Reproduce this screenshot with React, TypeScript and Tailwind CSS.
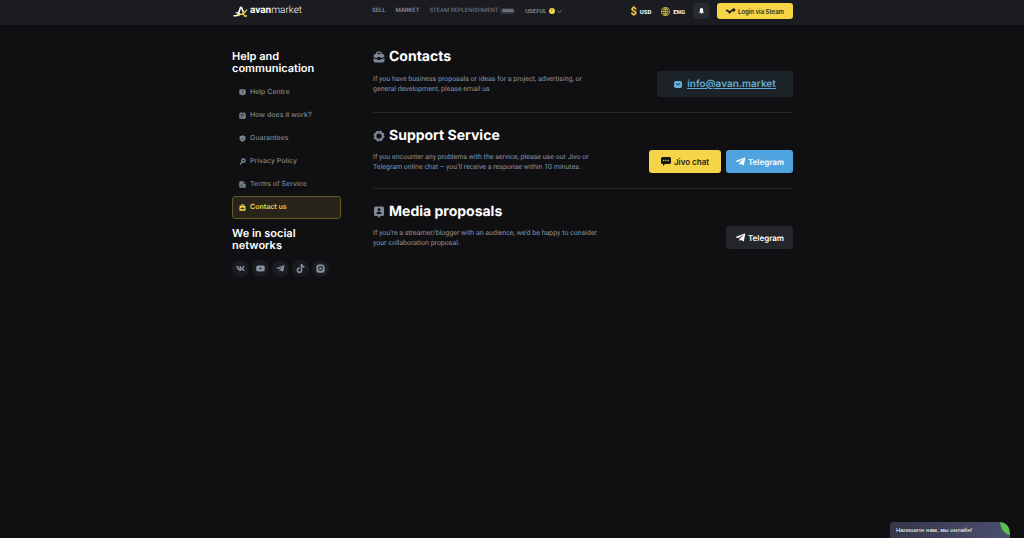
import type { ReactNode } from "react";
import { FaTelegramPlane, FaTiktok, FaVk, FaYoutube } from "react-icons/fa";

type IconProps = { className?: string };

const wide = "font-['Inter','DejaVu_Sans',sans-serif]";

function LogoMark() {
  return (
    <svg viewBox="0 0 30 22" className="h-[11px] w-[15px]" fill="none">
      <path d="M1 19.500h5c3 0 4-2 5-5L15 3h2l4 10" stroke="#fff" strokeWidth="3.200" />
      <path d="M5 13.500h5l4 2" stroke="#fff" strokeWidth="2.400" />
      <path d="M10 20c3-4 5-4 8-4 4-1 7-4 10-9M20 14l3 6h5" stroke="#f5d547" strokeWidth="2.800" />
    </svg>
  );
}

function BriefcaseIcon({ className }: IconProps) {
  return (
    <svg viewBox="0 0 24 24" className={className} fill="currentColor">
      <path d="M6 6V5a4 4 0 0 1 4-4h4a4 4 0 0 1 4 4v1h1a4 4 0 0 1 4 4v1c-2 2-4 3-7 3l-2-2h-4l-2 2c-3 0-5-1-7-3v-1a4 4 0 0 1 4-4h1Zm2.500 0h7V5A1.500 1.500 0 0 0 14 3.500h-4A1.500 1.500 0 0 0 8.500 5v1Z" />
      <path d="M1 14c2 1.500 5 2.500 8 2.500l1 1.500h4l1-1.500c3 0 6-1 8-2.500v5a4 4 0 0 1-4 4H5a4 4 0 0 1-4-4v-5Z" />
    </svg>
  );
}

function HelpIcon({ className }: IconProps) {
  return (
    <svg viewBox="0 0 24 24" className={className}>
      <path fill="currentColor" d="M6 1h12a5 5 0 0 1 5 5v9a5 5 0 0 1-5 5h-3l-3 3-3-3H6a5 5 0 0 1-5-5V6a5 5 0 0 1 5-5Z" />
      <path d="M9 8c1-3 6-3 6 0 0 2-3 2-3 4M12 15v2" fill="none" stroke="#101012" strokeWidth="2" />
    </svg>
  );
}

function CalendarIcon({ className }: IconProps) {
  return (
    <svg viewBox="0 0 24 24" className={className}>
      <path fill="currentColor" d="M5 1h4v2h6V1h4v2a4 4 0 0 1 4 4v12a4 4 0 0 1-4 4H5a4 4 0 0 1-4-4V7a4 4 0 0 1 4-4V1Z" />
      <path d="M4 8h16M6 13h10M6 17h6" stroke="#101012" strokeWidth="2" />
    </svg>
  );
}

function ShieldIcon({ className }: IconProps) {
  return (
    <svg viewBox="0 0 24 24" className={className}>
      <path fill="currentColor" d="m12 1 10 4v9c0 4-5 7-10 9-5-2-10-5-10-9V5l10-4Z" />
      <path d="m8 12 3 3 5-6" fill="none" stroke="#101012" strokeWidth="2.400" />
    </svg>
  );
}

function KeyIcon({ className }: IconProps) {
  return (
    <svg viewBox="0 0 24 24" className={className} fill="none" stroke="currentColor">
      <circle cx="15" cy="9" r="5.500" strokeWidth="5" />
      <path d="m11 13-8 8M4 18l4 4" strokeWidth="4" />
    </svg>
  );
}

function DocumentIcon({ className }: IconProps) {
  return (
    <svg viewBox="0 0 24 24" className={className}>
      <path fill="currentColor" d="M5 1h9v5a3 3 0 0 0 3 3h6v10a4 4 0 0 1-4 4H5a4 4 0 0 1-4-4V5a4 4 0 0 1 4-4Zm11 0 7 6h-6a1 1 0 0 1-1-1V1Z" />
      <path d="M5 11h5M5 17h8l4-4" fill="none" stroke="#101012" strokeWidth="2" />
    </svg>
  );
}

function GearIcon({ className }: IconProps) {
  return (
    <svg viewBox="0 0 24 24" className={className} fill="none" stroke="currentColor">
      <circle cx="12" cy="12" r="7.500" strokeWidth="4.500" />
      <circle cx="12" cy="12" r="9.500" strokeWidth="3" strokeDasharray="4.200 3.260" />
    </svg>
  );
}

function PersonIcon({ className }: IconProps) {
  return (
    <svg viewBox="0 0 24 24" className={className}>
      <path fill="currentColor" d="M5 1h14a3 3 0 0 1 3 3v13a3 3 0 0 1-3 3h-4l-3 4-3-4H5a3 3 0 0 1-3-3V4a3 3 0 0 1 3-3Z" />
      <circle cx="12" cy="7.500" r="2.800" fill="#101012" />
      <path fill="#101012" d="M7 15c0-5 10-5 10 0v1H7v-1Z" />
    </svg>
  );
}

function InstagramIcon({ className }: IconProps) {
  return (
    <svg viewBox="0 0 24 24" className={className}>
      <rect x="1" y="1" width="22" height="22" rx="6" fill="currentColor" />
      <circle cx="12" cy="12" r="5" fill="none" stroke="#1b1c21" strokeWidth="3" />
      <circle cx="18.500" cy="5.500" r="1.500" fill="#1b1c21" />
    </svg>
  );
}

function MailIcon() {
  return (
    <svg viewBox="0 0 24 21" className="h-[7px] w-2">
      <rect width="24" height="21" rx="5" fill="#67acd2" />
      <path d="m6 7 6 5 6-5" fill="none" stroke="#1b232a" strokeWidth="2.600" />
    </svg>
  );
}

function ChatIcon() {
  return (
    <svg viewBox="0 0 20 18" className="h-[9px] w-[10px]">
      <path fill="#15161a" d="M3 0h14a3 3 0 0 1 3 3v8a3 3 0 0 1-3 3H8l-4 4v-4H3a3 3 0 0 1-3-3V3a3 3 0 0 1 3-3Z" />
      <g fill="#f5d547">
        <circle cx="5.500" cy="7" r="1.400" />
        <circle cx="10" cy="7" r="1.400" />
        <circle cx="14.500" cy="7" r="1.400" />
      </g>
    </svg>
  );
}

function SteamIcon() {
  return (
    <svg viewBox="0 0 30 18" className="h-[6px] w-[10px]" fill="#24231c" stroke="#24231c">
      <path d="m0 6 11 6 9-6" fill="none" strokeWidth="5" />
      <circle cx="11" cy="13" r="3" strokeWidth="2" />
      <circle cx="23" cy="6" r="4" strokeWidth="3" />
    </svg>
  );
}

const menu = [
  { label: "Help Centre", Icon: HelpIcon },
  { label: "How does it work?", Icon: CalendarIcon },
  { label: "Guarantees", Icon: ShieldIcon },
  { label: "Privacy Policy", Icon: KeyIcon },
  { label: "Terms of Service", Icon: DocumentIcon },
  { label: "Contact us", Icon: BriefcaseIcon, active: true },
];

const socials = [
  { label: "VK", Icon: FaVk },
  { label: "YouTube", Icon: FaYoutube },
  { label: "Telegram", Icon: FaTelegramPlane },
  { label: "TikTok", Icon: FaTiktok },
  { label: "Instagram", Icon: InstagramIcon },
];

function Header() {
  return (
    <header className="bg-[#1b1c21] font-['Roboto',sans-serif]">
      <div className="mx-auto flex h-[25px] max-w-[562px] items-center pb-[3px] pl-[2px] text-[6px] font-medium">
        <a href="#" className="flex w-[139px] items-center gap-[2px] text-[10px] leading-[12px] text-white">
          <LogoMark />
          <span><b>avan</b><span className="font-light">market</span></span>
        </a>
        <nav className="flex items-center gap-[10px] leading-2 text-[#8a93a1]">
          <a href="#">SELL</a>
          <a href="#">MARKET</a>
          <a href="#" className="flex items-center gap-[2px] font-normal text-[#747a84]">
            STEAM REPLENISHMENT
            <span className="rounded-full bg-[#34363c] px-[2px] text-[4px] leading-[6px] font-bold text-[#a0a4ab]">SOON</span>
          </a>
          <button type="button" className="flex items-center gap-[2px]">
            USEFUL
            <span className="flex size-[6px] items-center justify-center rounded-full bg-[#f5d547] text-[4px] leading-none font-bold text-[#57501e]">!</span>
            <svg viewBox="0 0 10 6" className="h-[3px] w-[5px]" fill="none" stroke="currentColor" strokeWidth="1.500"><path d="m1 1 4 4 4-4" /></svg>
          </button>
        </nav>
        <div className="ml-auto flex items-center font-bold text-white">
          <button type="button" className="flex items-center gap-[3px]">
            <span className="text-[11px] leading-none text-[#f5d547]">$</span>
            USD
          </button>
          <button type="button" className="ml-[10px] flex items-center gap-[3px]">
            <svg viewBox="0 0 20 20" className="size-[9px]" fill="none" stroke="#e0c442" strokeWidth="1.600">
              <circle cx="10" cy="10" r="9" />
              <ellipse cx="10" cy="10" rx="4" ry="9" />
              <path d="M10 1v18M1 10h18M3 5h14M3 15h14" />
            </svg>
            ENG
          </button>
          <button type="button" aria-label="Notifications" className="ml-2 flex size-4 items-center justify-center rounded-[3px] bg-[#282a31]">
            <svg viewBox="0 0 12 14" className="h-[6px] w-[5px]" fill="#fff">
              <path d="M6 0c3 0 4 2 4 5v3l2 3H0l2-3V5c0-3 1-5 4-5Zm-2 12h4c0 2-4 2-4 0Z" />
            </svg>
          </button>
          <button type="button" className={`${wide} ml-2 flex h-4 w-[76px] items-center justify-center gap-[2px] rounded-[3px] bg-[#f5d547] text-[6px] font-semibold text-[#33301d]`}>
            <SteamIcon />
            Login via Steam
          </button>
        </div>
      </div>
    </header>
  );
}

function Sidebar() {
  return (
    <aside className={`${wide} w-[109px] shrink-0 text-white`}>
      <h2 className="text-[11px] leading-[12px] font-semibold">Help and<br />communication</h2>
      <nav className="mt-[7px] text-[7px] font-medium text-[#7f8794]">
        {menu.map(({ label, Icon, active }) => (
          <a
            key={label}
            href="#"
            className={
              active
                ? "flex h-[23px] items-center gap-1 rounded-[3px] border border-[#655a27] bg-[#28241a] pl-[6px] font-semibold text-[#f5d547]"
                : "flex h-[23px] items-center gap-1 pl-[7px]"
            }
          >
            <Icon className="size-[7px]" />
            {label}
          </a>
        ))}
      </nav>
      <h2 className="mt-2 text-[11px] leading-[12px] font-semibold">We in social<br />networks</h2>
      <div className="mt-[9px] flex gap-[3px]">
        {socials.map(({ label, Icon }) => (
          <a key={label} href="#" aria-label={label} className="flex size-[17px] items-center justify-center rounded-full bg-[#1b1c21] text-[#8892a1]">
            <Icon className="size-[9px]" />
          </a>
        ))}
      </div>
    </aside>
  );
}

type SectionProps = {
  icon: ReactNode;
  title: string;
  lines: [string, string];
  children: ReactNode;
};

function Section({ icon, title, lines, children }: SectionProps) {
  return (
    <section className="mb-4 border-b border-[#25262a] pb-[15px] last:border-0">
      <h2 className={`${wide} flex items-center gap-1 text-[14px] leading-[14px] font-bold text-white`}>
        <span className="text-[#7d8796]">{icon}</span>
        {title}
      </h2>
      <div className="mt-[7px] flex items-center justify-between">
        <p className="font-['Roboto',sans-serif] text-[7px] leading-[10px] text-[#8a92a0]">{lines[0]}<br />{lines[1]}</p>
        <div className={`${wide} flex gap-[5px] text-[8px] font-semibold text-white`}>{children}</div>
      </div>
    </section>
  );
}

export default function App() {
  return (
    <div className="min-h-screen bg-[#101012] font-['Inter',sans-serif] [text-rendering:geometricPrecision]">
      <Header />
      <main className="mx-auto flex max-w-[562px] gap-8 pt-[25px] pl-px">
        <Sidebar />
        <div className="flex-1">
          <Section
            icon={<BriefcaseIcon className="size-3" />}
            title="Contacts"
            lines={["If you have business proposals or ideas for a project, advertising, or", "general development, please email us"]}
          >
            <a href="mailto:info@avan.market" className="flex h-[26px] w-[136px] items-center justify-center gap-[5px] rounded-[3px] bg-[#1b2329] text-[10px] font-semibold text-[#67acd2] underline">
              <MailIcon />
              info@avan.market
            </a>
          </Section>
          <Section
            icon={<GearIcon className="size-3" />}
            title="Support Service"
            lines={["If you encounter any problems with the service, please use our Jivo or", "Telegram online chat – you’ll receive a response within 10 minutes."]}
          >
            <button type="button" className="flex h-[23px] w-[72px] items-center justify-center gap-[3px] rounded-[3px] bg-[#f5d547] text-[#24231c]">
              <ChatIcon />
              Jivo chat
            </button>
            <a href="#" className="flex h-[23px] w-[67px] items-center justify-center gap-[2px] rounded-[3px] bg-[#4fa3df]">
              <FaTelegramPlane className="size-[11px]" />
              Telegram
            </a>
          </Section>
          <Section
            icon={<PersonIcon className="size-3" />}
            title="Media proposals"
            lines={["If you’re a streamer/blogger with an audience, we’d be happy to consider", "your collaboration proposal."]}
          >
            <a href="#" className="flex h-[23px] w-[67px] items-center justify-center gap-[2px] rounded-[3px] bg-[#25262c]">
              <FaTelegramPlane className="size-[11px]" />
              Telegram
            </a>
          </Section>
        </div>
      </main>
      <button type="button" className="fixed right-[14px] bottom-0 flex h-4 w-[120px] items-center overflow-hidden rounded-t-[4px] rounded-tr-[10px] bg-linear-to-r from-[#343649] to-[#4b4f70] pl-[6px] font-['Liberation_Sans',Arial,sans-serif] text-[6px] text-white">
        Напишите нам, мы онлайн!
        <svg viewBox="0 0 10 14" className="absolute top-0 right-0 h-[14px] w-[10px]">
          <path d="M0 0c6 0 10 5 10 13C4 12 1 7 0 0Z" fill="#5bbf4b" />
        </svg>
      </button>
    </div>
  );
}
